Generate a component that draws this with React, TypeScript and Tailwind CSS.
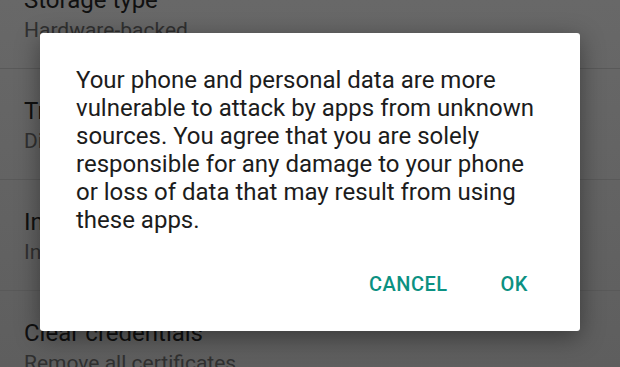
import React from 'react';

interface SettingRow {
    title: string;
    summary: string;
}

const rows: SettingRow[] = [
    { title: 'Storage type', summary: 'Hardware-backed' },
    { title: 'Trusted credentials', summary: 'Display trusted CA certificates' },
    { title: 'Install from storage', summary: 'Install certificates from storage' },
    { title: 'Clear credentials', summary: 'Remove all certificates' },
];

/**
 * Security settings list, dimmed behind the "unknown sources" warning dialog.
 */
const App: React.FC = () => {
    return (
        <div className="relative h-[367px] w-[620px] overflow-hidden bg-linear-to-b from-[#686868] to-[#5e5e5e] font-['Roboto','Liberation_Sans',sans-serif]">
            {/* Settings list behind the scrim */}
            <div className="-mt-[42px]">
                {rows.map((row) => (
                    <div
                        key={row.title}
                        className="border-b border-[#595959] pl-[24px] pt-[26px] pb-[23px]"
                    >
                        <div className="text-[24px] leading-[32px] text-[#101010]">{row.title}</div>
                        <div className="text-[21px] leading-[29px] text-[#303030]">{row.summary}</div>
                    </div>
                ))}
            </div>

            {/* Warning dialog */}
            <div className="absolute left-[40px] top-[33px] flex w-[540px] flex-col rounded-[3px] bg-white shadow-[0_6px_24px_rgba(0,0,0,0.4)]">
                <p className="px-[36px] pt-[33px] text-[24px] leading-[28px] text-[#1c1c1c]">
                    Your phone and personal data are more vulnerable to attack by apps from unknown
                    sources. You agree that you are solely responsible for any damage to your phone
                    or loss of data that may result from using these apps.
                </p>
                <div className="mt-[32px] flex justify-end gap-[53px] pr-[52px] pb-[29px]">
                    <button type="button" className="text-[20px] font-medium leading-[36px] tracking-[0.5px] text-[#0b9182]">
                        CANCEL
                    </button>
                    <button type="button" className="text-[20px] font-medium leading-[36px] tracking-[0.5px] text-[#0b9182]">
                        OK
                    </button>
                </div>
            </div>
        </div>
    );
};

export default App;
